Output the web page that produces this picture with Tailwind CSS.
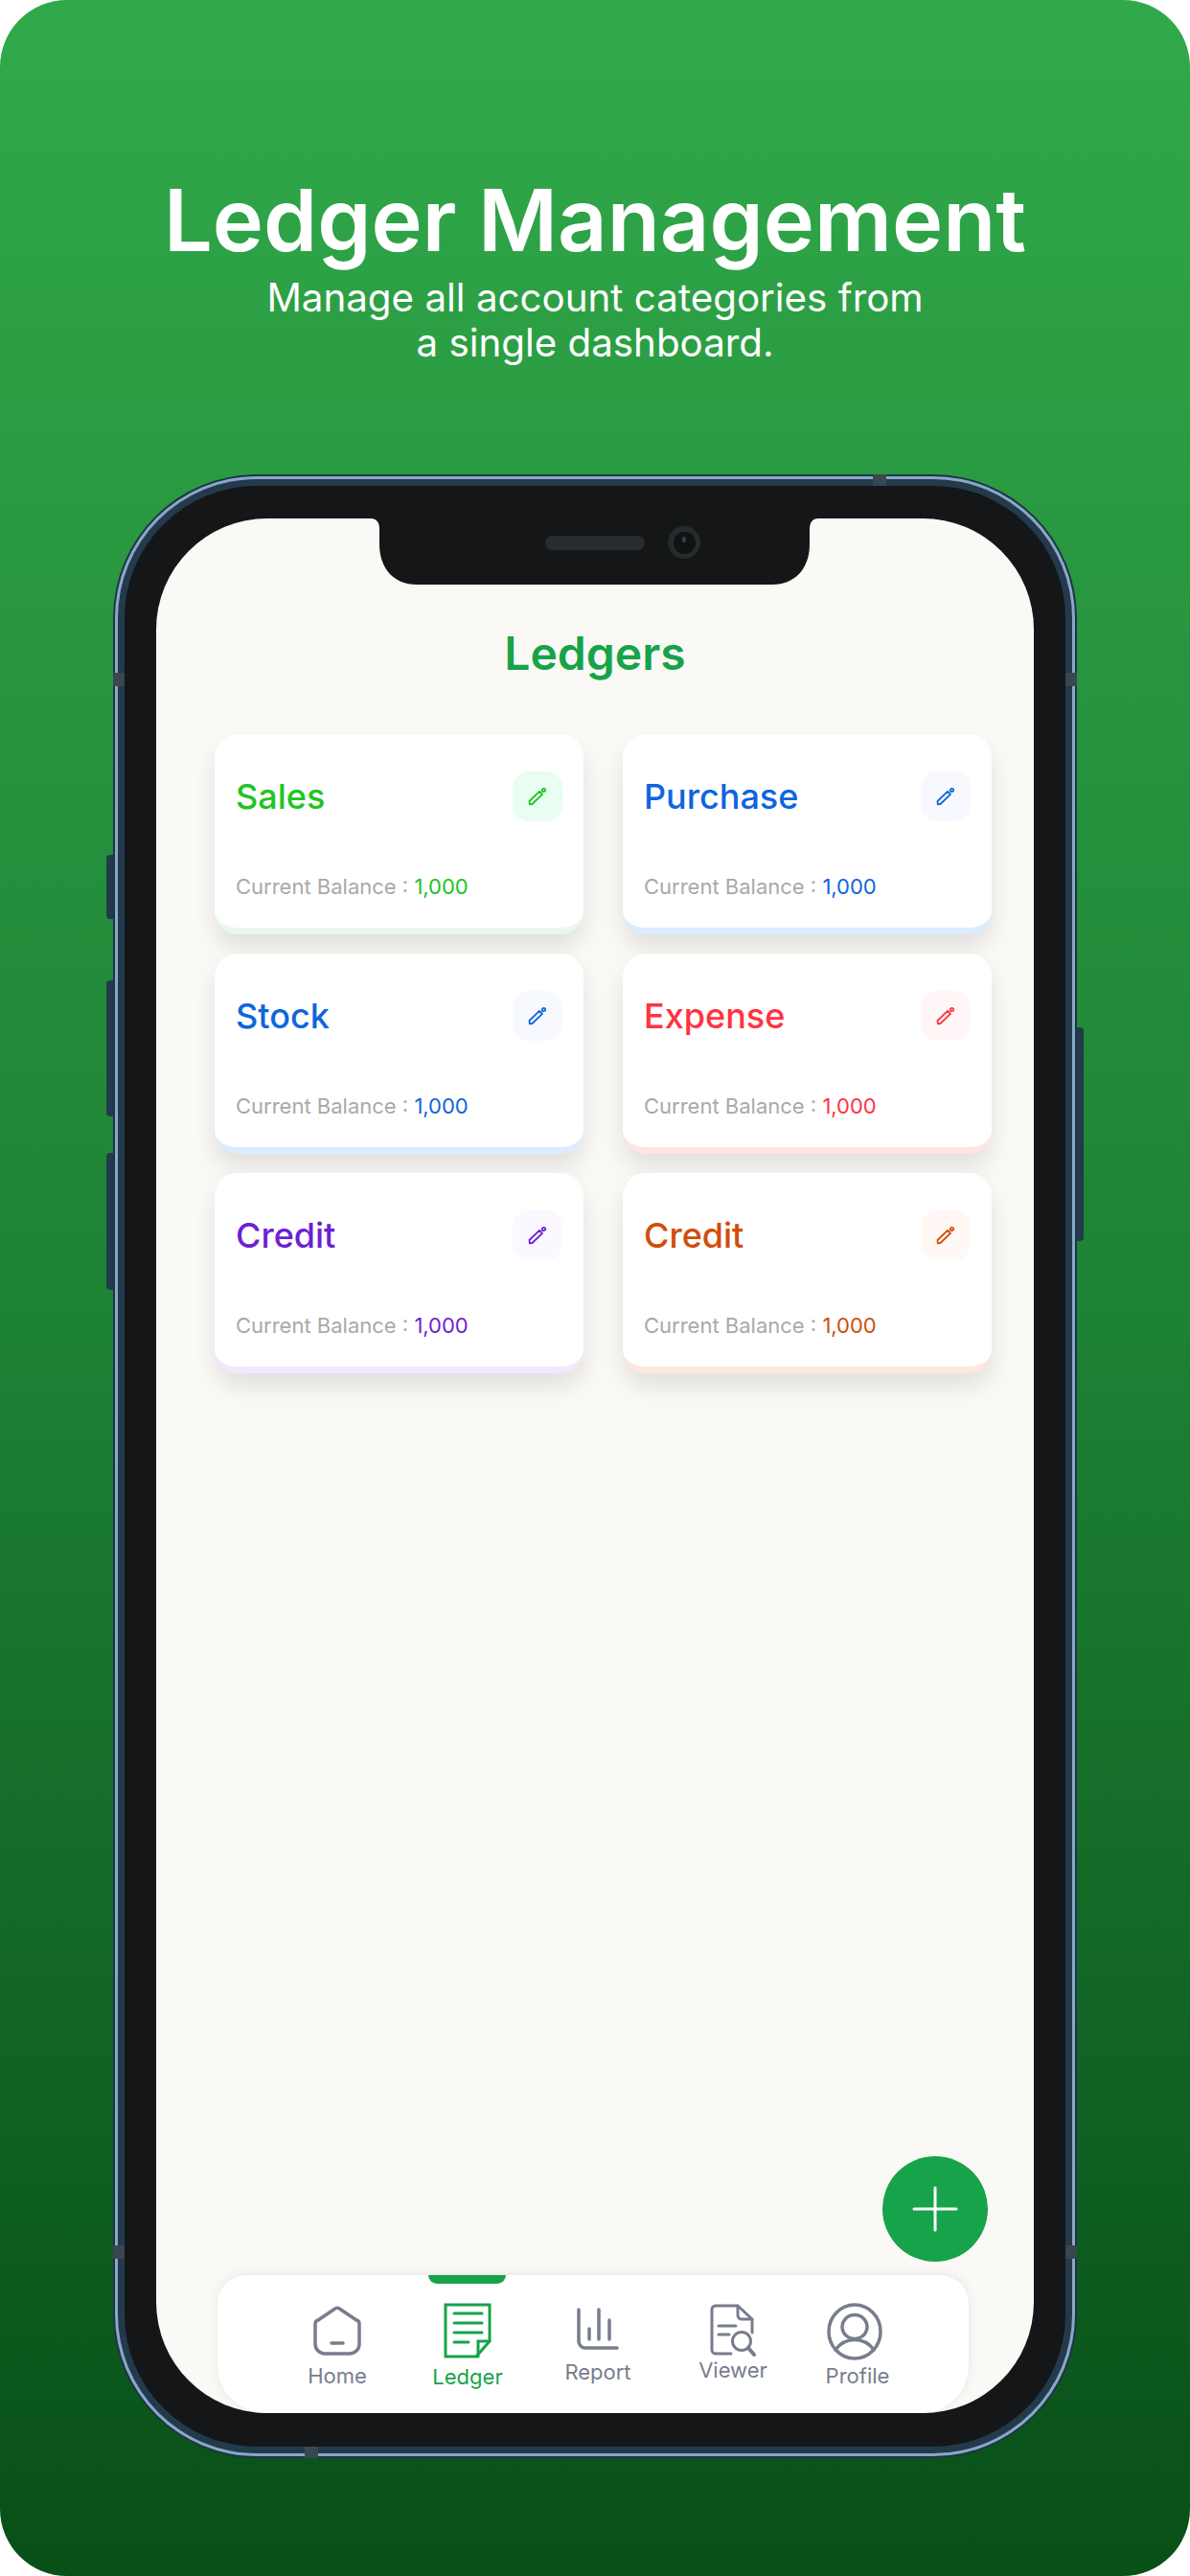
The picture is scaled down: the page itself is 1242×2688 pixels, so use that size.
<!DOCTYPE html>
<html lang="en">
<head>
  <meta charset="UTF-8">
  <meta name="viewport" content="width=device-width, initial-scale=1.0">
  <title>Ledger Management</title>
  <script src="https://cdn.jsdelivr.net/npm/@tailwindcss/browser@4"></script>
</head>
<body class="bg-white font-['Inter',sans-serif]">
  <div class="w-[1242px] h-[2688px] rounded-[70px] overflow-hidden bg-gradient-to-b from-[#31a94a] via-[#1e8335] to-[#084f18] flex flex-col items-center">

    <!-- Heading -->
    <h1 class="mt-[180px] text-[90px] leading-[100px] font-semibold text-white text-center">Ledger Management</h1>
    <p class="mt-[7px] text-[40.3px] leading-[47px] text-white text-center">Manage all account categories from<br>a single dashboard.</p>

    <!-- Phone -->
    <div class="relative mt-[114px] w-[1006px] h-[2070px] shrink-0 rounded-[150px] bg-[#1d3446] p-[2px]">
      <!-- side buttons -->
      <div class="absolute left-[-7px] top-[397px] w-[7px] h-[67px] rounded-l-[4px] bg-[#223a4b]"></div>
      <div class="absolute left-[-7px] top-[528px] w-[7px] h-[142px] rounded-l-[4px] bg-[#223a4b]"></div>
      <div class="absolute left-[-7px] top-[708px] w-[7px] h-[143px] rounded-l-[4px] bg-[#223a4b]"></div>
      <div class="absolute right-[-7px] top-[577px] w-[7px] h-[223px] rounded-r-[4px] bg-[#223a4b]"></div>

      <div class="w-full h-full rounded-[148px] bg-[#8aa8c6] p-[3px]">
        <div class="w-full h-full rounded-[145px] bg-[#223a4b] p-[7px]">
          <div class="w-full h-full rounded-[138px] bg-[#141618] pt-[34px] pb-[35px] px-[33px]">

            <!-- Screen -->
            <div class="relative w-full h-full rounded-[116px] overflow-hidden bg-[#faf9f6] flex flex-col">
              <!-- notch -->
              <div class="absolute left-[224px] top-0 w-[467px] h-[69px] pt-[8px]">
                <svg class="absolute left-0 top-0" width="467" height="69" viewBox="0 0 467 69" fill="#141618"><path d="M0 0C6 0 9 4 9 11V27C9 52 24 69 48 69H419C443 69 458 52 458 27V11C458 4 461 0 467 0Z"/></svg>
                <div class="relative flex items-center h-[34px]">
                  <div class="ml-[182px] w-[104px] h-[15px] rounded-full bg-[#282c2e]"></div>
                  <div class="ml-[24px] w-[34px] h-[34px] rounded-full bg-[#262b2c] flex items-center justify-center">
                    <div class="w-[23px] h-[23px] rounded-full bg-[#101214] flex items-start justify-center pt-[5px]">
                      <div class="w-[4px] h-[6px] rounded-full bg-[#3a4042]"></div>
                    </div>
                  </div>
                </div>
              </div>

              <h2 class="mt-[112px] text-[48px] leading-[58px] font-semibold text-[#16a34a] text-center">Ledgers</h2>

              <div class="ml-[61px] mt-[55px] grid grid-cols-[385px_385px] gap-x-[41px] gap-y-[20px]">

                <div class="h-[209px] rounded-[24px] bg-white border-b-[7px] border-[#e8f8ee] shadow-[0_14px_24px_rgba(0,0,0,0.10)] px-[22px] pt-[39px] flex flex-col">
                  <div class="flex items-center justify-between h-[52px]">
                    <span class="text-[36px] font-medium text-[#20c424]">Sales</span>
                    <div class="w-[52px] h-[52px] rounded-[17px] bg-[#e9fdf1] flex items-center justify-center text-[#20c424]">
                      <svg width="20" height="20" viewBox="0 0 20 20" fill="none" stroke="currentColor" stroke-width="1.8" stroke-linejoin="round"><path d="M1.500 15 L12 4.800 L15 7.800 L4.500 18 L1.800 18.300 Z"/><circle cx="16.500" cy="3.500" r="1.700"/></svg>
                    </div>
                  </div>
                  <p class="mt-[53px] text-[22px] leading-[30px] text-[#a9a9a9]">Current Balance : <span class="text-[#20c424]">1,000</span></p>
                </div>

                <div class="h-[209px] rounded-[24px] bg-white border-b-[7px] border-[#dcecff] shadow-[0_14px_24px_rgba(0,0,0,0.10)] px-[22px] pt-[39px] flex flex-col">
                  <div class="flex items-center justify-between h-[52px]">
                    <span class="text-[36px] font-medium text-[#0f65dd]">Purchase</span>
                    <div class="w-[52px] h-[52px] rounded-[17px] bg-[#f7f9ff] flex items-center justify-center text-[#0f65dd]">
                      <svg width="20" height="20" viewBox="0 0 20 20" fill="none" stroke="currentColor" stroke-width="1.8" stroke-linejoin="round"><path d="M1.500 15 L12 4.800 L15 7.800 L4.500 18 L1.800 18.300 Z"/><circle cx="16.500" cy="3.500" r="1.700"/></svg>
                    </div>
                  </div>
                  <p class="mt-[53px] text-[22px] leading-[30px] text-[#a9a9a9]">Current Balance : <span class="text-[#0f65dd]">1,000</span></p>
                </div>

                <div class="h-[209px] rounded-[24px] bg-white border-b-[7px] border-[#dcecff] shadow-[0_14px_24px_rgba(0,0,0,0.10)] px-[22px] pt-[39px] flex flex-col">
                  <div class="flex items-center justify-between h-[52px]">
                    <span class="text-[36px] font-medium text-[#0f65dd]">Stock</span>
                    <div class="w-[52px] h-[52px] rounded-[17px] bg-[#f7f9ff] flex items-center justify-center text-[#0f65dd]">
                      <svg width="20" height="20" viewBox="0 0 20 20" fill="none" stroke="currentColor" stroke-width="1.8" stroke-linejoin="round"><path d="M1.500 15 L12 4.800 L15 7.800 L4.500 18 L1.800 18.300 Z"/><circle cx="16.500" cy="3.500" r="1.700"/></svg>
                    </div>
                  </div>
                  <p class="mt-[53px] text-[22px] leading-[30px] text-[#a9a9a9]">Current Balance : <span class="text-[#0f65dd]">1,000</span></p>
                </div>

                <div class="h-[209px] rounded-[24px] bg-white border-b-[7px] border-[#ffe4e6] shadow-[0_14px_24px_rgba(0,0,0,0.10)] px-[22px] pt-[39px] flex flex-col">
                  <div class="flex items-center justify-between h-[52px]">
                    <span class="text-[36px] font-medium text-[#ff3341]">Expense</span>
                    <div class="w-[52px] h-[52px] rounded-[17px] bg-[#fff7f7] flex items-center justify-center text-[#ff3341]">
                      <svg width="20" height="20" viewBox="0 0 20 20" fill="none" stroke="currentColor" stroke-width="1.8" stroke-linejoin="round"><path d="M1.500 15 L12 4.800 L15 7.800 L4.500 18 L1.800 18.300 Z"/><circle cx="16.500" cy="3.500" r="1.700"/></svg>
                    </div>
                  </div>
                  <p class="mt-[53px] text-[22px] leading-[30px] text-[#a9a9a9]">Current Balance : <span class="text-[#ff3341]">1,000</span></p>
                </div>

                <div class="h-[209px] rounded-[24px] bg-white border-b-[7px] border-[#f1e8fd] shadow-[0_14px_24px_rgba(0,0,0,0.10)] px-[22px] pt-[39px] flex flex-col">
                  <div class="flex items-center justify-between h-[52px]">
                    <span class="text-[36px] font-medium text-[#6d1fd4]">Credit</span>
                    <div class="w-[52px] h-[52px] rounded-[17px] bg-[#fbf8ff] flex items-center justify-center text-[#6d1fd4]">
                      <svg width="20" height="20" viewBox="0 0 20 20" fill="none" stroke="currentColor" stroke-width="1.8" stroke-linejoin="round"><path d="M1.500 15 L12 4.800 L15 7.800 L4.500 18 L1.800 18.300 Z"/><circle cx="16.500" cy="3.500" r="1.700"/></svg>
                    </div>
                  </div>
                  <p class="mt-[53px] text-[22px] leading-[30px] text-[#a9a9a9]">Current Balance : <span class="text-[#6d1fd4]">1,000</span></p>
                </div>

                <div class="h-[209px] rounded-[24px] bg-white border-b-[7px] border-[#ffe7dd] shadow-[0_14px_24px_rgba(0,0,0,0.10)] px-[22px] pt-[39px] flex flex-col">
                  <div class="flex items-center justify-between h-[52px]">
                    <span class="text-[36px] font-medium text-[#cf4e0a]">Credit</span>
                    <div class="w-[52px] h-[52px] rounded-[17px] bg-[#fff8f4] flex items-center justify-center text-[#cf4e0a]">
                      <svg width="20" height="20" viewBox="0 0 20 20" fill="none" stroke="currentColor" stroke-width="1.8" stroke-linejoin="round"><path d="M1.500 15 L12 4.800 L15 7.800 L4.500 18 L1.800 18.300 Z"/><circle cx="16.500" cy="3.500" r="1.700"/></svg>
                    </div>
                  </div>
                  <p class="mt-[53px] text-[22px] leading-[30px] text-[#a9a9a9]">Current Balance : <span class="text-[#cf4e0a]">1,000</span></p>
                </div>
              </div>

              <!-- add button -->
              <div class="absolute left-[758px] top-[1709px] w-[110px] h-[110px] rounded-full bg-[#16a34a] flex items-center justify-center">
                <svg width="48" height="48" viewBox="0 0 48 48" stroke="#fff" stroke-width="3" stroke-linecap="round"><path d="M24 2V46M2 24H46"/></svg>
              </div>

              <!-- bottom nav -->
              <nav class="relative mt-auto ml-[64px] w-[784px] h-[145px] rounded-t-[30px] rounded-b-[50px] bg-white border-t border-[#ededed] shadow-[0_0_12px_rgba(0,0,0,0.07)] pl-[75px] flex text-[22px] text-[#777d8c]">
                <div class="absolute left-[220px] top-0 w-[81px] h-[9px] rounded-b-[9px] bg-[#16a34a]"></div>

                <div class="w-[100px] pt-[32px] flex flex-col items-center">
                  <svg width="52" height="52" viewBox="0 0 52 52" fill="none" stroke="currentColor" stroke-width="3.500" stroke-linejoin="round" stroke-linecap="round"><path d="M23 3.500a4.500 4.500 0 0 1 6 0L46 15a4 4 0 0 1 3 4V40a10 10 0 0 1-10 10H13a10 10 0 0 1-10-10V19a4 4 0 0 1 3-4Z"/><path d="M20 39H32"/></svg>
                  <span class="mt-[8px] leading-[26px]">Home</span>
                </div>

                <div class="ml-[36px] w-[100px] pt-[29px] flex flex-col items-center text-[#16a34a]">
                  <svg width="50" height="58" viewBox="0 0 50 58" fill="none" stroke="currentColor" stroke-width="3" stroke-linejoin="miter" stroke-linecap="round"><path d="M2 2H48V40L34 56H2Z"/><path d="M48 40H36V56"/><path d="M11 11H40M11 21H40M11 31H40M11 41H26"/></svg>
                  <span class="mt-[6px] leading-[26px]">Ledger</span>
                </div>

                <div class="ml-[36px] w-[100px] pt-[34px] flex flex-col items-center">
                  <svg width="46" height="46" viewBox="0 0 46 46" fill="none" stroke="currentColor" stroke-width="3.500" stroke-linecap="round"><path d="M3 2V35a7 7 0 0 0 7 7H43"/><path d="M14 22V33M24 2V33M35 13V33"/></svg>
                  <span class="mt-[8px] leading-[26px]">Report</span>
                </div>

                <div class="ml-[41px] w-[100px] pt-[30px] flex flex-col items-center">
                  <svg width="48" height="56" viewBox="0 0 48 56" fill="none" stroke="currentColor" stroke-width="3" stroke-linecap="round" stroke-linejoin="round"><path d="M22 52H6a4 4 0 0 1-4-4V6a4 4 0 0 1 4-4H29L44 16V30"/><path d="M29 2V12a4 4 0 0 0 4 4H44"/><path d="M9 23H27M9 32H20"/><circle cx="33" cy="39" r="9.500"/><path d="M40 46L46 53" stroke-width="4"/></svg>
                  <span class="leading-[26px]">Viewer</span>
                </div>

                <div class="ml-[30px] w-[100px] pt-[29px] flex flex-col items-center">
                  <svg class="-ml-[6px]" width="58" height="60" viewBox="0 0 58 60" fill="none" stroke="currentColor" stroke-width="3.500" stroke-linecap="round"><ellipse cx="29" cy="30" rx="27" ry="28"/><ellipse cx="29" cy="25" rx="13" ry="12.500"/><path d="M9 49C14 42 21 38.500 29 38.500S44 42 49 49"/></svg>
                  <span class="mt-[3px] leading-[26px]">Profile</span>
                </div>
              </nav>
            </div>
            <!-- /Screen -->

          </div>
        </div>
      </div>

      <!-- antenna bands -->
      <div class="absolute left-0 top-[207px] w-[12px] h-[14px] bg-[#3a4650]"></div>
      <div class="absolute left-0 top-[1848px] w-[12px] h-[14px] bg-[#3a4650]"></div>
      <div class="absolute right-0 top-[207px] w-[12px] h-[14px] bg-[#3a4650]"></div>
      <div class="absolute right-0 top-[1848px] w-[12px] h-[14px] bg-[#3a4650]"></div>
      <div class="absolute left-[793px] top-0 w-[14px] h-[12px] bg-[#3a4650]"></div>
      <div class="absolute left-[200px] bottom-0 w-[14px] h-[12px] bg-[#3a4650]"></div>
    </div>
  </div>
</body>
</html>
